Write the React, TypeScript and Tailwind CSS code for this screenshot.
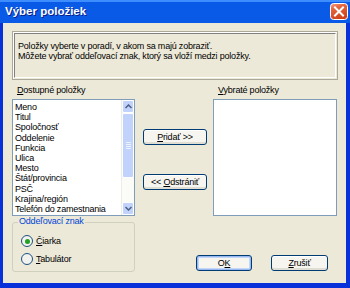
import type { ReactNode } from "react";

const items = [
  "Meno",
  "Titul",
  "Spoločnosť",
  "Oddelenie",
  "Funkcia",
  "Ulica",
  "Mesto",
  "Štát/provincia",
  "PSČ",
  "Krajina/región",
  "Telefón do zamestnania",
];

function U({ children }: { children: ReactNode }) {
  return <span className="underline underline-offset-[1px]">{children}</span>;
}

function XpButton({ children, isDefault }: { children: ReactNode; isDefault?: boolean }) {
  return (
    <div
      className={`flex h-full w-full items-center justify-center rounded-[3px] border border-[#003c74] bg-[#f6f5f0] text-black ${
        isDefault
          ? "shadow-[inset_0_0_0_1px_#97b8f0,inset_0_0_0_2px_#c4d6f6]"
          : "shadow-[inset_0_-2px_0_#e0ddd2,inset_0_1px_0_#ffffff]"
      }`}
    >
      {children}
    </div>
  );
}

function Radio({ checked, children }: { checked?: boolean; children: ReactNode }) {
  return (
    <div className="flex h-[12px] items-center gap-[3px]">
      <span className="flex h-[12px] w-[12px] items-center justify-center rounded-full border border-[#1c5180] bg-[#f2f2ee]">
        {checked && <span className="h-[5px] w-[5px] rounded-full bg-[#21a121]" />}
      </span>
      <span>{children}</span>
    </div>
  );
}

function CloseButton() {
  return (
    <svg width="18" height="17" viewBox="0 0 18 17">
      <defs>
        <linearGradient id="cb" x1="0" y1="0" x2="0.4" y2="1">
          <stop offset="0" stopColor="#f3a38b" />
          <stop offset="0.35" stopColor="#e4663f" />
          <stop offset="1" stopColor="#cf431c" />
        </linearGradient>
      </defs>
      <rect x="0.5" y="0.5" width="17" height="16" rx="3" fill="url(#cb)" stroke="#ffffff" />
      <path d="M5 4.5 L13 12.5 M13 4.5 L5 12.5" stroke="#ffffff" strokeWidth="2" strokeLinecap="square" />
    </svg>
  );
}

function Scrollbar() {
  return (
    <div className="flex w-[13px] flex-col border-l border-[#eeede5] bg-[#fbfbf8]">
      <div className="flex h-[13px] items-center justify-center rounded-[2px] border border-white bg-[#c1d3fb]">
        <svg width="7" height="5" viewBox="0 0 7 5">
          <path d="M0.5 4 L3.5 1 L6.5 4" stroke="#4d6185" strokeWidth="1.5" fill="none" />
        </svg>
      </div>
      <div className="flex h-[65px] flex-col items-center justify-center gap-[1px] rounded-[2px] border border-white bg-[#c1d3fb]">
        <span className="h-px w-[5px] bg-[#eef4fe]" />
        <span className="h-px w-[5px] bg-[#eef4fe]" />
        <span className="h-px w-[5px] bg-[#eef4fe]" />
        <span className="h-px w-[5px] bg-[#eef4fe]" />
      </div>
      <div className="flex-1" />
      <div className="flex h-[13px] items-center justify-center rounded-[2px] border border-white bg-[#c1d3fb]">
        <svg width="7" height="5" viewBox="0 0 7 5">
          <path d="M0.5 1 L3.5 4 L6.5 1" stroke="#4d6185" strokeWidth="1.5" fill="none" />
        </svg>
      </div>
    </div>
  );
}

export default function App() {
  return (
    <div
      className="flex h-[288px] w-[350px] flex-col overflow-hidden bg-[#0831d9] text-[9px] leading-none tracking-[-0.2px] text-black"
      style={{ fontFamily: '"Liberation Sans", Arial, sans-serif' }}
    >
      {/* title bar */}
      <div className="flex h-[23px] shrink-0 items-center justify-between bg-[#0a5ae8] pl-[5px] pr-[2px] shadow-[inset_0_2px_0_#3d8dff]">
        <span className="text-[11.5px] font-bold tracking-normal text-white [text-shadow:1px_1px_0_#0a1e88]">Výber položiek</span>
        <CloseButton />
      </div>

      {/* body */}
      <div className="mb-[5px] ml-[3px] mr-[4px] flex flex-1 flex-col bg-[#ece9d8] pl-[9px] pr-[5px] pt-[8px]">
        <div className="h-[49px] w-[326px] border border-[#aca899] p-[1px] shadow-[inset_1px_1px_0_#ffffff]">
          <div className="h-full border border-[#808080] border-b-white border-r-white px-[3px] pt-[8px] leading-[9.5px]">
            <div>Položky vyberte v poradí, v akom sa majú zobraziť.</div>
            <div>Môžete vybrať oddeľovací znak, ktorý sa vloží medzi položky.</div>
          </div>
        </div>

        <div className="mt-[6px] flex">
          <div className="flex w-[123px] flex-col">
            <div className="h-[12px] pl-[5px]">
              <U>D</U>ostupné položky
            </div>
            <div className="mt-[1px] flex h-[117px] border border-[#7f9db9] bg-white">
              <div className="flex-1 pl-[2px] pt-[2px] leading-[10.2px]">
                {items.map((it) => (
                  <div key={it} className="whitespace-nowrap">
                    {it}
                  </div>
                ))}
              </div>
              <Scrollbar />
            </div>
          </div>

          <div className="ml-[8px] flex w-[64px] flex-col">
            <div className="mt-[43px] h-[16px]">
              <XpButton>
                <U>P</U>
                {"ridať >>"}
              </XpButton>
            </div>
            <div className="mt-[29px] h-[16px]">
              <XpButton>
                <span className="whitespace-pre">{"<< "}</span>
                <U>O</U>
                {"dstrániť"}
              </XpButton>
            </div>
          </div>

          <div className="ml-[6px] flex w-[124px] flex-col">
            <div className="h-[12px] pl-[5px]">
              <U>V</U>ybraté položky
            </div>
            <div className="mt-[1px] h-[117px] border border-[#7f9db9] bg-white" />
          </div>
        </div>

        <div className="mt-[6px] flex items-end">
          <div className="relative h-[50px] w-[123px] rounded-[3px] border border-[#d0d0bf] px-[8px] pt-[12px]">
            <span className="absolute -top-[6px] left-[5px] bg-[#ece9d8] px-[1px] text-[#0046d5]">Oddeľovací znak</span>
            <div className="flex flex-col gap-[6px]">
              <Radio checked>
                <U>Č</U>iarka
              </Radio>
              <Radio>
                <U>T</U>abulátor
              </Radio>
            </div>
          </div>
          <div className="mb-[1px] ml-[61px] h-[16px] w-[56px]">
            <XpButton isDefault>
              O<U>K</U>
            </XpButton>
          </div>
          <div className="mb-[1px] ml-[19px] h-[16px] w-[57px]">
            <XpButton>
              <U>Z</U>rušiť
            </XpButton>
          </div>
        </div>
      </div>
    </div>
  );
}
